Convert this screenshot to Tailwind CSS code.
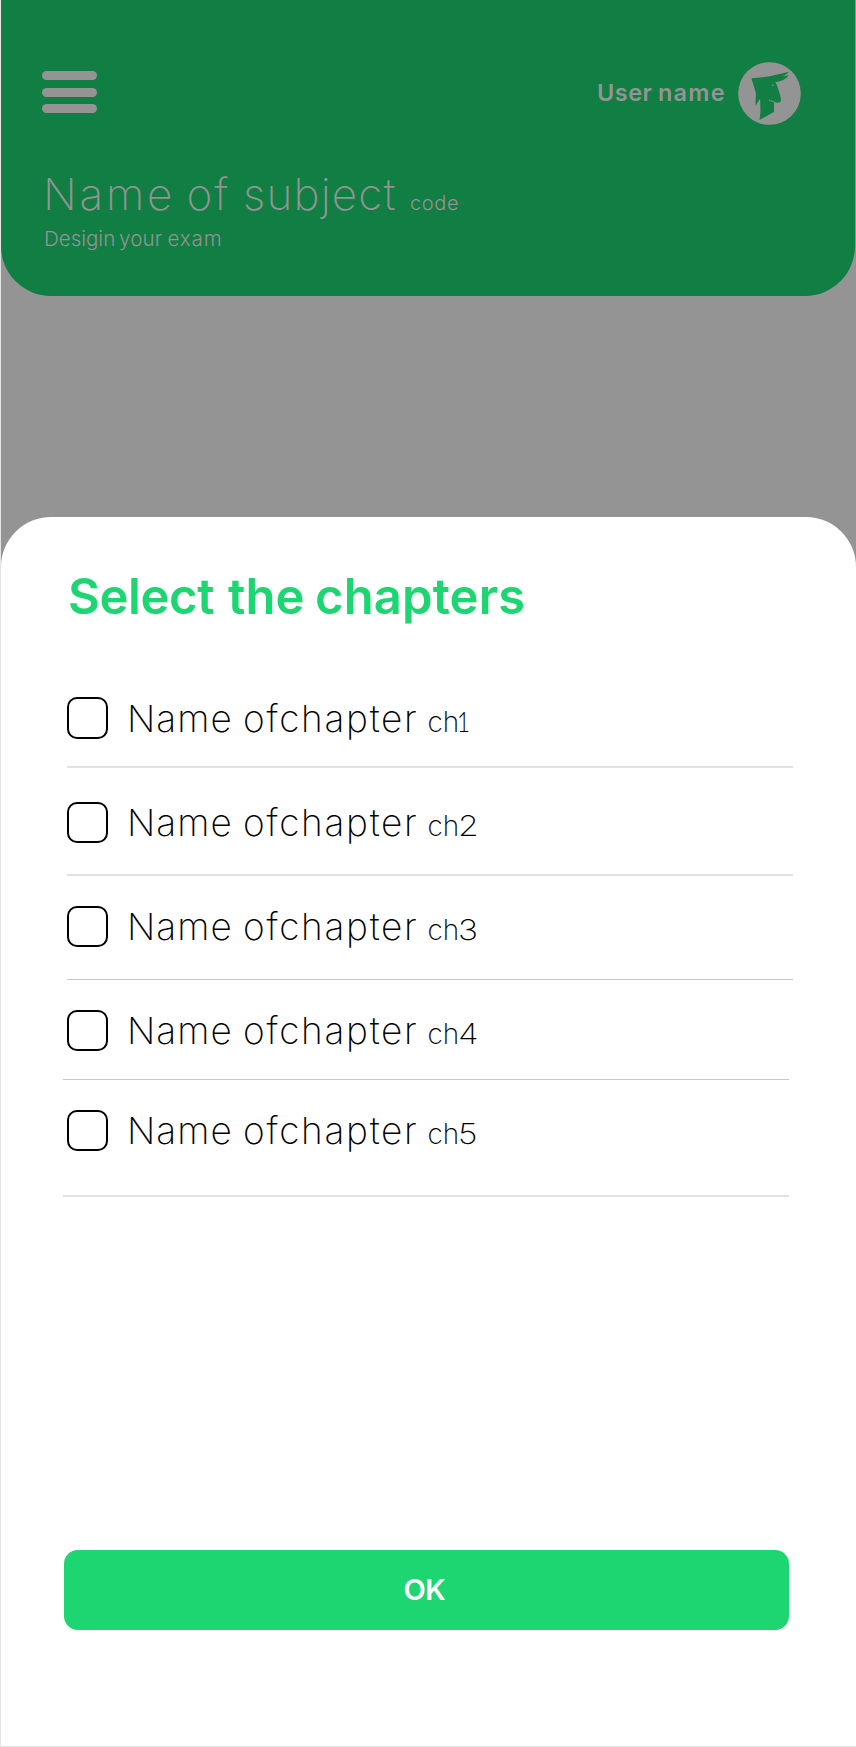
<!DOCTYPE html>
<html lang="en">
<head>
<meta charset="utf-8">
<title>Select the chapters</title>
<script src="https://cdn.jsdelivr.net/npm/@tailwindcss/browser@4"></script>
</head>
<body class="bg-white font-['Inter',sans-serif]">
<div class="relative w-[856px] h-[1747px] overflow-hidden border-l border-b border-[#e4e4e4] bg-white">
  <div class="h-[620px] bg-[#949494]">
    <header class="mr-px h-[296px] rounded-b-[50px] bg-[#117e43] text-[#949494]">
      <div class="flex justify-between pt-[62px] pl-[41px] pr-[54px]">
        <div class="mt-[9px] flex w-[55px] flex-col gap-[7.5px]">
          <span class="h-[9px] rounded-full bg-[#949494]"></span>
          <span class="h-[9px] rounded-full bg-[#949494]"></span>
          <span class="h-[9px] rounded-full bg-[#949494]"></span>
        </div>
        <div class="flex">
          <div class="mt-[19px] flex text-[23.5px] leading-none font-semibold">
            <span class="w-[61px] tracking-[0.5px]">User</span>
            <span class="w-[80px] tracking-[1.2px]">name</span>
          </div>
          <svg class="size-[63px]" viewBox="9 7 189 189">
            <circle cx="103.500" cy="101.500" r="94" fill="#949494"/>
            <path fill="#117e43" d="M49 56C82 55 124 46 161 36C157 43 150 47 142 50C150 49 156 48 161 45C156 57 142 64 121 67C129 82 137 109 138 121C137 127 133 130 128 129L117 127L117 157L73 181C77 164 77 148 75 117C70 125 65 131 62 139C61 126 62 114 63 102C58 85 53 68 49 56Z"/>
            <path d="M102 121q3 4 8 3q4 0 7 3" fill="none" stroke="#949494" stroke-width="3"/>
            <circle cx="113" cy="77" r="2.500" fill="#949494"/>
          </svg>
        </div>
      </div>
      <div class="mt-[47px] ml-[42px] flex items-baseline text-[44px] leading-none font-extralight">
        <span class="w-[143.5px] tracking-[2.8px]">Name</span>
        <span class="w-[56.500px] tracking-[2px]">of</span>
        <span class="w-[167px] tracking-[1.2px]">subject</span>
        <span class="text-[20px] leading-none font-light tracking-[0.6px]">code</span>
      </div>
      <div class="mt-[12.500px] ml-[43px] flex text-[20.5px] leading-none font-light">
        <span class="w-[75px]">Desigin</span>
        <span class="w-[48.500px] tracking-[0.2px]">your</span>
        <span class="tracking-[0.9px]">exam</span>
      </div>
    </header>
  </div>

  <main class="relative -mt-[103px] h-[1230px] rounded-t-[50px] bg-white pt-[55px]">
    <h1 class="ml-[67px] flex text-[49px] leading-none font-semibold text-[#1dd571]">
      <span class="w-[160px] tracking-[-0.4px]">Select</span>
      <span class="w-[87px]">the</span>
      <span class="tracking-[0.1px]">chapters</span>
    </h1>

    <ul class="mt-[43px] text-[37px] leading-none font-[250] text-black">
      <li class="flex h-[102px] items-start pt-[33px] pl-[65.500px]">
        <span class="size-[41.500px] rounded-[10px] border-2 border-black"></span>
        <span class="mt-[2.500px] ml-[19px] flex items-baseline"><span class="w-[116px] tracking-[1px]">Name</span><span class="w-[184.500px] tracking-[1.7px]">ofchapter</span><span class="w-[29.500px] text-[28px]">ch</span><span class="origin-left scale-x-80 font-['Lato'] text-[28px] leading-none font-light">1</span></span>
      </li>
      <li class="ml-[66px] w-[726px] border-t-2 border-[#e2e2e2]"></li>
      <li class="flex h-[106px] items-start pt-[33.500px] pl-[65.500px]">
        <span class="size-[41.500px] rounded-[10px] border-2 border-black"></span>
        <span class="mt-[2px] ml-[19px] flex items-baseline"><span class="w-[116px] tracking-[1px]">Name</span><span class="w-[184.500px] tracking-[1.7px]">ofchapter</span><span class="w-[30.500px] text-[28px]">ch</span><span class="origin-left scale-x-120 text-[28px]">2</span></span>
      </li>
      <li class="ml-[66px] w-[726px] border-t-2 border-[#e2e2e2]"></li>
      <li class="flex h-[103px] items-start pt-[29.500px] pl-[65.500px]">
        <span class="size-[41.500px] rounded-[10px] border-2 border-black"></span>
        <span class="mt-[2px] ml-[19px] flex items-baseline"><span class="w-[116px] tracking-[1px]">Name</span><span class="w-[184.500px] tracking-[1.7px]">ofchapter</span><span class="w-[30.500px] text-[28px]">ch</span><span class="origin-left scale-x-120 text-[28px]">3</span></span>
      </li>
      <li class="ml-[66px] w-[726px] border-t border-[#c8c8c8]"></li>
      <li class="flex h-[99px] items-start pt-[29.500px] pl-[65.500px]">
        <span class="size-[41.500px] rounded-[10px] border-2 border-black"></span>
        <span class="mt-[2.500px] ml-[19px] flex items-baseline"><span class="w-[116px] tracking-[1px]">Name</span><span class="w-[184.500px] tracking-[1.7px]">ofchapter</span><span class="w-[30.500px] text-[28px]">ch</span><span class="origin-left scale-x-120 text-[28px]">4</span></span>
      </li>
      <li class="ml-[62px] w-[726px] border-t border-[#c8c8c8]"></li>
      <li class="flex h-[115px] items-start pt-[29.500px] pl-[65.500px]">
        <span class="size-[41.500px] rounded-[10px] border-2 border-black"></span>
        <span class="mt-[2.500px] ml-[19px] flex items-baseline"><span class="w-[116px] tracking-[1px]">Name</span><span class="w-[184.500px] tracking-[1.7px]">ofchapter</span><span class="w-[30.500px] text-[28px]">ch</span><span class="origin-left scale-x-120 text-[28px]">5</span></span>
      </li>
      <li class="ml-[62px] w-[726px] border-t-2 border-[#e2e2e2]"></li>
    </ul>

    <button class="mt-[353px] ml-[62.500px] block h-[79.500px] w-[725.500px] rounded-[14px] bg-[#1dd571] pr-[4px] text-[29px] leading-none font-semibold tracking-[-0.5px] text-white">OK</button>
  </main>
</div>
</body>
</html>
